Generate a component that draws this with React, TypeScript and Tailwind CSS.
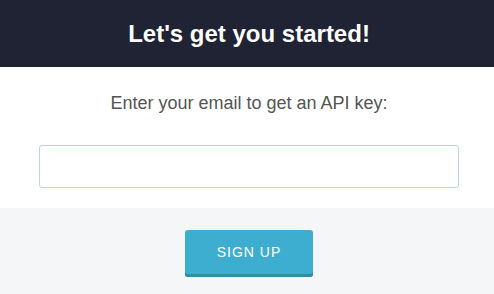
export default function App() {
  return (
    <div className="w-[494px] h-[294px] flex flex-col bg-[#f5f6f8]" style={{ fontFamily: '"Liberation Sans", Arial, sans-serif' }}>
      <div className="h-[67px] bg-[#1f2333] flex items-center justify-center pl-[4px]">
        <h1 className="text-white font-bold text-[24px] leading-none">Let's get you started!</h1>
      </div>
      <div className="h-[141px] bg-white flex flex-col items-center pl-[4px]">
        <p className="mt-[26px] text-[18px] leading-[21px] text-[#555555]">Enter your email to get an API key:</p>
        <input type="text" className="mt-[31px] w-[420px] h-[43px] border border-[#b7d8ea] rounded-[3px] outline-none px-3" />
      </div>
      <div className="flex-1 flex justify-center pt-[22px] pl-[4px]">
        <button className="w-[128px] h-[47px] rounded-[3px] bg-[#3eaed0] shadow-[inset_0_-3px_0_#2f8ea8] text-white text-[14px] tracking-[1px] pb-[2px]">SIGN UP</button>
      </div>
    </div>
  );
}
